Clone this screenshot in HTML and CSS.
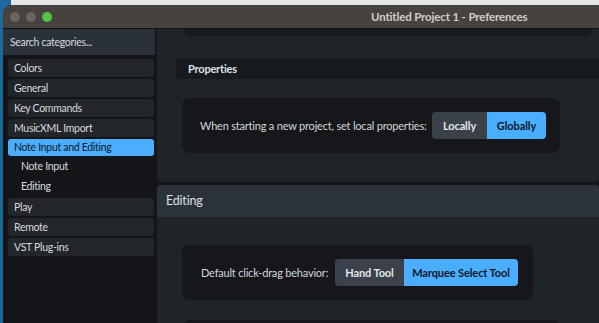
FILE: index.html
```html
<!DOCTYPE html>
<html>
<head>
<meta charset="utf-8">
<link rel="stylesheet" href="styles.css">
</head>
<body>
<div class="window">
  <header class="titlebar">
    <div class="lights"><span class="light"></span><span class="light"></span><span class="light green"></span></div>
    <div class="title">Untitled Project 1 - Preferences</div>
  </header>
  <div class="main">
    <aside class="sidebar">
      <div class="search">Search categories...</div>
      <nav class="cats">
        <div class="cat">Colors</div>
        <div class="cat">General</div>
        <div class="cat">Key Commands</div>
        <div class="cat">MusicXML Import</div>
        <div class="cat sel">Note Input and Editing</div>
        <div class="sub">Note Input</div>
        <div class="sub last">Editing</div>
        <div class="cat">Play</div>
        <div class="cat">Remote</div>
        <div class="cat">VST Plug-ins</div>
      </nav>
    </aside>
    <section class="content">
      <div class="section s1">
        <div class="stub"></div>
        <div class="subhead">Properties</div>
        <div class="card card1">
          <span class="label">When starting a new project, set local properties:</span>
          <div class="seg">
            <span class="opt w-loc">Locally</span>
            <span class="opt on w-glob">Globally</span>
          </div>
        </div>
      </div>
      <div class="section s2">
        <div class="sechead">Editing</div>
        <div class="sbody">
          <div class="card card2">
            <span class="label">Default click-drag behavior:</span>
            <div class="seg">
              <span class="opt w-hand">Hand Tool</span>
              <span class="opt on w-marq">Marquee Select Tool</span>
            </div>
          </div>
          <div class="card card3"></div>
        </div>
      </div>
    </section>
  </div>
</div>
</body>
</html>
```
FILE: styles.css
```css
* { box-sizing: border-box; }
html, body { margin: 0; padding: 0; }
body {
  width: 599px;
  height: 323px;
  overflow: hidden;
  background:
    linear-gradient(#e4e4e4, #e4e4e4) 11px 0 / 100% 5px no-repeat,
    #1b6a9b;
  font-family: "Lato", "Noto Sans", sans-serif;
  font-size: 11px;
  color: #d2d5d9;
}
.window {
  margin: 5px 0 0 3px;
  height: 318px;
  border-top-left-radius: 9px;
  overflow: hidden;
  display: flex;
  flex-direction: column;
  background: #141518;
}
.titlebar {
  height: 24px;
  flex: none;
  background: #48423e;
  border-bottom: 1px solid #121212;
  display: flex;
  align-items: center;
}
.lights { display: flex; gap: 6px; padding-left: 7px; }
.light { width: 10px; height: 10px; border-radius: 50%; background: #6b6562; }
.light.green { background: #52c645; }
.title {
  margin-left: 319px;
  font-weight: 700;
  font-size: 11.5px;
  color: #cfcdcb;
  letter-spacing: -0.15px;
}
.main { flex: 1; display: flex; min-height: 0; }
.sidebar { width: 154px; flex: none; background: #141518; }
.search {
  height: 26px;
  margin-right: 2px;
  background: #2a313b;
  padding-left: 7px;
  line-height: 26px;
  color: #d6dadf;
  font-size: 10.5px;
  letter-spacing: -0.3px;
}
.cats {
  padding: 4px 3px 0 5px;
  display: flex;
  flex-direction: column;
  font-size: 10.5px;
  letter-spacing: -0.3px;
}
.cat {
  height: 18px;
  margin-bottom: 2px;
  line-height: 18px;
  padding-left: 6px;
  background: #222529;
  border-radius: 3px;
  color: #d8dbdf;
}
.cat.sel { height: 17px; line-height: 17px; margin-bottom: 0; background: #4badfd; color: #0d1826; }
.sub { height: 20px; line-height: 20px; padding-left: 13px; color: #d8dbdf; }
.sub.last { margin-bottom: 2px; }
.content {
  flex: 1;
  display: flex;
  flex-direction: column;
  gap: 3px;
  background: #141619;
  min-width: 0;
}
.section { background: #1f2428; }
.s1 { height: 153px; flex: none; border-radius: 0 0 4px 4px; display: flex; flex-direction: column; }
.stub {
  height: 7px;
  margin: 0 6px 0 26px;
  background: #181b1f;
  border-radius: 0 0 8px 8px;
}
.subhead {
  margin: 22px 0 0 19px;
  height: 21px;
  line-height: 21px;
  padding-left: 12px;
  background: #181b1e;
  border-radius: 3px 0 0 3px;
  font-weight: 700;
  color: #dfe2e5;
  letter-spacing: -0.2px;
}
.card {
  height: 55px;
  margin-left: 25px;
  background: #15171a;
  border-radius: 8px;
  display: flex;
  align-items: center;
  padding-left: 18px;
  flex: none;
}
.card1 { margin-top: 19px; width: 378px; }
.card2 { width: 351px; padding-left: 19px; }
.card3 { width: 378px; }
.label { color: #d3d6d9; white-space: nowrap; letter-spacing: -0.2px; }
.seg {
  display: flex;
  height: 27px;
  border-radius: 4px;
  overflow: hidden;
  margin-left: auto;
  margin-right: 14px;
}
.card2 .seg { margin-right: 15px; }
.opt {
  display: flex;
  align-items: center;
  justify-content: center;
  background: #3a414a;
  color: #e4e6e9;
  font-weight: 700;
  white-space: nowrap;
  letter-spacing: -0.1px;
}
.opt.on { background: #4badfd; color: #0c1828; }
.w-loc { width: 55px; }
.w-glob { width: 59px; }
.w-hand { width: 69px; }
.w-marq { width: 114px; }
.s2 { flex: 1; border-radius: 4px 4px 0 0; display: flex; flex-direction: column; }
.sechead {
  height: 32px;
  flex: none;
  background: #2c323b;
  border-radius: 4px 4px 0 0;
  padding-left: 9px;
  line-height: 32px;
  font-size: 12.5px;
  letter-spacing: -0.2px;
  color: #dde0e3;
}
.sbody { flex: 1; padding-top: 28px; display: flex; flex-direction: column; gap: 20px; }
```
